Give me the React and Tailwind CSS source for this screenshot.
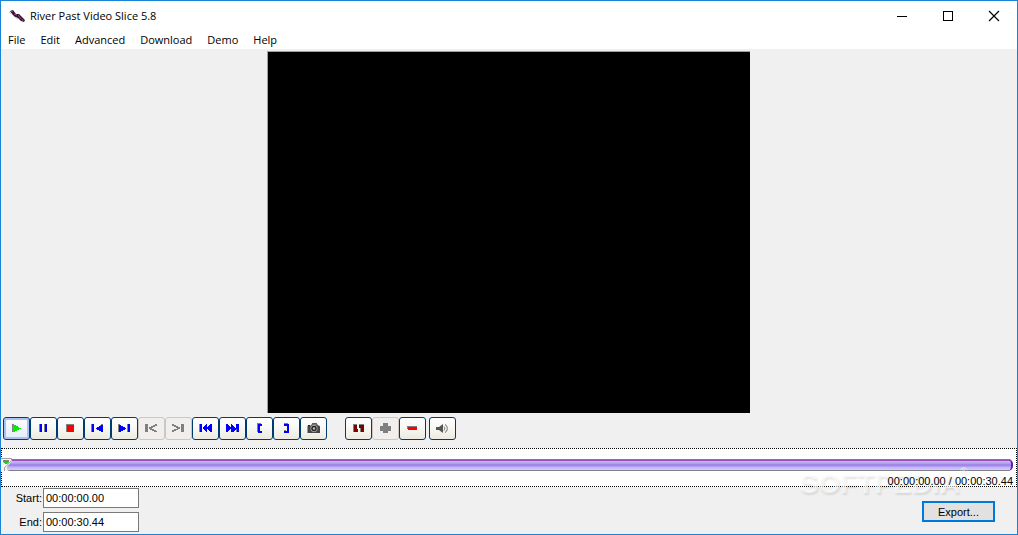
import React from "react";

const UI = "font-['Open_Sans','Noto_Sans',sans-serif]";
const MONO = "font-['Liberation_Sans',Arial,sans-serif]";

const BLUE = "#0000ff";
const GREY = "#808080";

function Icon({ children }) {
  return (
    <svg viewBox="0 0 27 23" className="block h-[23px] w-[27px] shrink-0" shapeRendering="crispEdges" aria-hidden="true">
      {children}
    </svg>
  );
}

const GLYPHS = {
  play: (
    <>
      <path d="M9 7h2v1h2v1h2v1h1v1H10v4H9z" fill={GREY} />
      <path d="M10 8h2v1h2v1h2v1h2v1h-2v1h-2v1h-2v1h-2z" fill="#00f000" />
    </>
  ),
  pause: (
    <>
      <path d="M9 7h3v8H9zM14 7h3v8h-3z" fill={GREY} />
      <path d="M10 7h2v8h-2zM15 7h2v8h-2z" fill={BLUE} />
    </>
  ),
  stop: (
    <>
      <path d="M9 7h8v8H9z" fill={GREY} />
      <path d="M10 8h7v7h-7z" fill="#ff0000" />
    </>
  ),
  prev: (
    <>
      <path d="M7 7h3v8H7zM12 10h2V9h2V8h1V7h2v1z" fill={GREY} />
      <path d="M8 7h2v8H8zM12 11h1v-1h2V9h2V8h2v7h-2v-1h-2v-1h-2v-1h-1z" fill={BLUE} />
    </>
  ),
  next: (
    <>
      <path d="M7 7h2v8H7zM16 7h3v8h-3z" fill={GREY} />
      <path d="M8 8h2v1h2v1h2v1h1v1h-1v1h-2v1h-2v1H8zM17 7h2v8h-2z" fill={BLUE} />
    </>
  ),
  toStart: <path d="M7 7h3v8H7zM17 7h2v2h-2v1h-2v1h-1v1h2v1h2v1h1v1h-3v-1h-2v-1h-2v-1h-1v-2h2V9h2V8h2z" fill={GREY} />,
  toEnd: <path d="M16 7h3v8h-3zM7 7h2v1h2v1h2v1h2v2h-2v1h-2v1H9v1H7v-2h2v-1h3v-1h-1v-1H9V9H7z" fill={GREY} />,
  rewind: (
    <>
      <path d="M7 7h3v8H7z" fill={GREY} />
      <path d="M8 7h2v8H8zM10 11h1v-1h1V9h1V8h1V7h1v3h1V9h1V8h1V7h2v8h-2v-1h-1v-1h-1v-1h-1v3h-1v-1h-1v-1h-1v-1h-1z" fill={BLUE} />
    </>
  ),
  forward: (
    <>
      <path d="M17 7h3v8h-3z" fill={GREY} />
      <path d="M7 7h2v1h1v1h1v1h1V7h1v1h1v1h1v1h1v1h1V7h3v8h-2v-3h-1v1h-1v1h-1v1h-3v-3h-1v1h-1v1H9v1H7z" fill={BLUE} />
    </>
  ),
  markIn: (
    <>
      <path d="M11 6h4v2h-2v7h-2z" fill={GREY} />
      <path d="M12 7h4v2h-2v5h2v2h-4z" fill={BLUE} />
    </>
  ),
  markOut: (
    <>
      <path d="M11 6h4v1h-4zM11 13h2v1h-2z" fill={GREY} />
      <path d="M11 7h5v9h-5v-2h3V9h-3z" fill={BLUE} />
    </>
  ),
  camera: (
    <g shapeRendering="auto">
      <path d="M8 8.5h3l1.5-2.5h4L18 8.5h1l1 1V16H7.500V9z" fill="#454545" />
      <path d="M13 6.500h3l1 1.500h-5z" fill="#777" />
      <circle cx="14" cy="11.500" r="3.300" fill="#262626" stroke="#a8a8a8" />
      <circle cx="14" cy="11.500" r="1.200" fill="#bdbdbd" />
      <path d="M8 8h2v1H8z" fill="#222" />
    </g>
  ),
  split: (
    <>
      <path d="M8 7h4v1H9v7H8zM14 7h5v1h-5zM15 11h1v4h-1z" fill={GREY} />
      <path d="M9 8h3v4h1v3H9zM14 8h5v7h-3v-4h-2z" fill="#800000" />
    </>
  ),
  add: <path d="M11 6h5v3h3v5h-3v2h-5v-2H8V9h3z" fill={GREY} />,
  remove: (
    <>
      <path d="M8 9h10v3H8z" fill={GREY} />
      <path d="M9 10h9v3H9z" fill="#ff0000" />
    </>
  ),
  sound: (
    <g shapeRendering="auto">
      <path d="M7 10h3l4-3v9l-4-3H7z" fill="#555" />
      <path d="M15 9.500c1 1 1 3 0 4M16 7.500c3 1.500 3 6.500 0 8" fill="none" stroke="#666" />
    </g>
  ),
};

function ToolButton({ name, label, disabled, focused }) {
  const look = disabled
    ? "border-[#cdc7bf] bg-[#f0efed]"
    : focused
    ? "border-[#003c74] bg-linear-to-b from-[#fdfdff] to-[#e4ecfa] shadow-[inset_0_0_0_2px_#a9c2f0]"
    : "border-[#003c74] bg-linear-to-b from-white via-[#f7f7f3] to-[#ecebe0]";
  return (
    <button
      type="button"
      aria-label={label}
      disabled={disabled}
      className={`flex h-[23px] w-[27px] items-center justify-center overflow-hidden rounded-[3px] border ${look}`}
    >
      <Icon>{GLYPHS[name]}</Icon>
    </button>
  );
}

const TRANSPORT = [
  { name: "play", label: "Play", focused: true },
  { name: "pause", label: "Pause" },
  { name: "stop", label: "Stop" },
  { name: "prev", label: "Previous frame" },
  { name: "next", label: "Next frame" },
  { name: "toStart", label: "Previous slice", disabled: true },
  { name: "toEnd", label: "Next slice", disabled: true },
  { name: "rewind", label: "Go to start" },
  { name: "forward", label: "Go to end" },
  { name: "markIn", label: "Set start" },
  { name: "markOut", label: "Set end" },
  { name: "camera", label: "Snapshot" },
];

const EDITING = [
  { name: "split", label: "Split" },
  { name: "add", label: "Add slice", disabled: true },
  { name: "remove", label: "Remove slice" },
];

function TitleBar() {
  return (
    <header className="flex h-[29px] items-center justify-between bg-white">
      <div className="flex items-center gap-1 pl-2">
        <svg viewBox="0 0 17 14" className="h-[14px] w-[17px]" aria-hidden="true">
          <path d="M1 2l3-1 3 4 3 0 3 3 3 3-1 2-3-1-3-3-3-1-3-3z" fill="#3a1230" />
          <path d="M2 2l2 1M5 5l3 1M9 6l3 4M13 10l1 2" stroke="#8d4a80" />
          <path d="M0 3l3 2M6 8l3 2" stroke="#c9c2c9" />
        </svg>
        <h1 className="text-[11px] leading-4 text-black">River Past Video Slice 5.8</h1>
      </div>
      <div className="flex">
        <button type="button" aria-label="Minimize" className="flex h-[29px] w-[46px] items-center justify-center">
          <svg viewBox="0 0 12 12" className="h-3 w-3" shapeRendering="crispEdges"><path d="M1 6h10v1H1z" /></svg>
        </button>
        <button type="button" aria-label="Maximize" className="flex h-[29px] w-[46px] items-center justify-center">
          <svg viewBox="0 0 12 12" className="h-3 w-3" shapeRendering="crispEdges"><path d="M1 1h10v10H1zM2 2v8h8V2z" fillRule="evenodd" /></svg>
        </button>
        <button type="button" aria-label="Close" className="flex h-[29px] w-[46px] items-center justify-center">
          <svg viewBox="0 0 12 12" className="h-3 w-3"><path d="M1 1l10 10M11 1L1 11" stroke="#000" strokeWidth="1.200" /></svg>
        </button>
      </div>
    </header>
  );
}

function Timeline() {
  return (
    <section className="relative flex h-[39px] flex-col border border-dotted border-black bg-white px-[3px] pt-[10px]">
      <span
        className={`pointer-events-none absolute right-[56px] bottom-[-12px] text-[28px] leading-7 font-bold text-white/60 [text-shadow:1px_2px_2px_rgba(0,0,0,0.1)] select-none ${MONO}`}
      >
        SOFTPEDIA<sup className="absolute top-[-4px] left-full text-[10px] leading-3 font-normal">®</sup>
      </span>
      <input
        type="range"
        aria-label="Position"
        min="0"
        max="3044"
        defaultValue="0"
        className="m-0 block h-3 w-full shrink-0 appearance-none rounded-r-[5px] rounded-l-[5px] border-r-2 border-[#5a1fa8] bg-[linear-gradient(to_bottom,#808080_0px,#808080_1px,#9650b4_1px,#9650b4_2px,#c8b8f4_2px,#b9a4f0_4px,#9a80e8_6px,#a48cf0_7px,#c0b0fa_8px,#d4ccff_11px,#808080_11px,#808080_12px)] [&::-webkit-slider-thumb]:h-3 [&::-webkit-slider-thumb]:w-2 [&::-webkit-slider-thumb]:appearance-none [&::-webkit-slider-thumb]:bg-transparent"
      />
      <svg viewBox="0 0 12 14" className="pointer-events-none absolute top-[9px] left-[-1px] h-[14px] w-3" aria-hidden="true">
        <path d="M0 0h11v3L6 9v4H0z" fill="#f4f4f4" />
        <path d="M0 .5h10.500v2L5 8.500 3.500 9.500V13" fill="none" stroke="#a0a0a0" />
        <path d="M2 2h6v2L5.500 6h-1L2 4z" fill="#808080" />
        <path d="M3 3h5v1L6 6H5L3 4z" fill="#00e000" />
      </svg>
      <output className={`relative mt-[5px] block text-right text-[11px] leading-[11px] text-black ${MONO}`}>
        00:00:00.00 / 00:00:30.44
      </output>
    </section>
  );
}

function TimeField({ id, label, value }) {
  return (
    <div className="flex items-center gap-px">
      <label htmlFor={id} className="w-[41px] text-right text-[11px] leading-5">{label}</label>
      <input
        id={id}
        type="text"
        defaultValue={value}
        className="h-5 w-24 border border-[#7a7a7a] bg-white px-[2px] text-[11px] leading-4 text-black outline-none"
      />
    </div>
  );
}

export default function App() {
  return (
    <div className={`flex h-screen flex-col border border-[#1883d7] bg-[#f0f0f0] text-black ${UI}`}>
      <TitleBar />
      <nav className="flex h-[19px] items-end gap-[15px] bg-white pb-px pl-[7px] text-[11px] leading-4">
        {["File", "Edit", "Advanced", "Download", "Demo", "Help"].map((item) => (
          <button key={item} type="button">{item}</button>
        ))}
      </nav>
      <main className="flex min-h-0 flex-1 justify-center pt-[2px] pr-px">
        <div className="aspect-[483/362] border-t border-l border-[#a0a0a0] bg-black" />
      </main>
      <div className="flex h-[35px] items-start pt-1 pl-[2px]">
        <div className="flex">
          {TRANSPORT.map((b) => <ToolButton key={b.name} {...b} />)}
        </div>
        <div className="ml-[18px] flex">
          {EDITING.map((b) => <ToolButton key={b.name} {...b} />)}
        </div>
        <div className="ml-[3px] flex">
          <ToolButton name="sound" label="Volume" />
        </div>
      </div>
      <Timeline />
      <footer className={`flex items-start justify-between pt-px pr-[22px] pb-[2px] ${MONO}`}>
        <div className="flex flex-col gap-1">
          <TimeField id="start" label="Start:" value="00:00:00.00" />
          <TimeField id="end" label="End:" value="00:00:30.44" />
        </div>
        <button type="button" className="mt-[13px] flex h-[21px] w-[73px] items-center justify-center border-2 border-[#0078d7] bg-[#e1e1e1] text-[11px] leading-4">
          Export...
        </button>
      </footer>
    </div>
  );
}
